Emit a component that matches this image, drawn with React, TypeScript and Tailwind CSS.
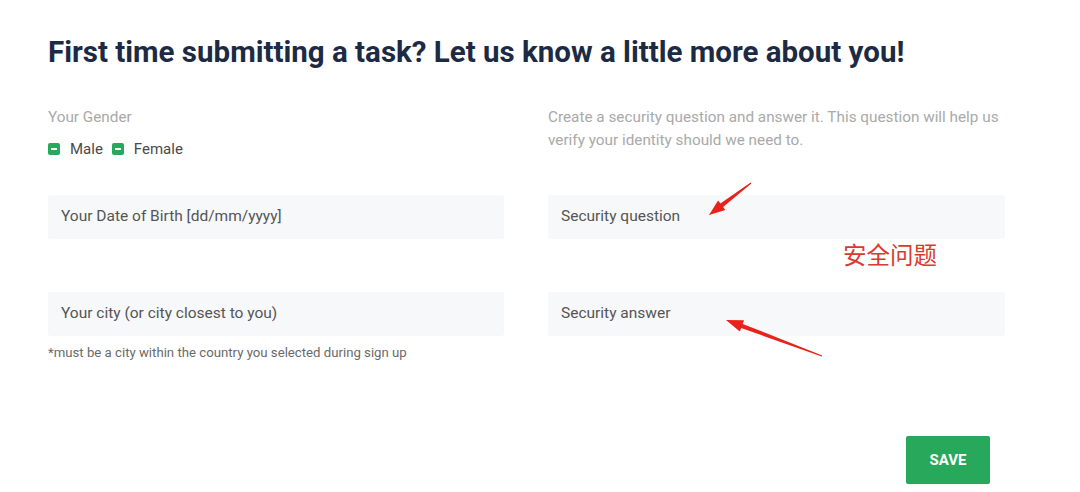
import React from "react";

type Pt = [number, number];

// tapered annotation arrow, tail -> tip
const arrowPoints = (tail: Pt, tip: Pt, headLen: number, headW: number) => {
  const dx = tip[0] - tail[0];
  const dy = tip[1] - tail[1];
  const len = Math.hypot(dx, dy);
  const ux = dx / len;
  const uy = dy / len;
  const nx = -uy;
  const ny = ux;
  const bx = tip[0] - ux * headLen;
  const by = tip[1] - uy * headLen;
  const pts: Pt[] = [
    [tail[0] + nx * 0.6, tail[1] + ny * 0.6],
    [bx + nx * 2.2, by + ny * 2.2],
    [bx + nx * headW, by + ny * headW],
    tip,
    [bx - nx * headW, by - ny * headW],
    [bx - nx * 2.2, by - ny * 2.2],
    [tail[0] - nx * 0.6, tail[1] - ny * 0.6],
  ];
  return pts.map((p) => p.join(",")).join(" ");
};

const Check = ({ label }: { label: string }) => (
  <label className="flex items-center gap-[10px]">
    <span className="flex h-[12px] w-[12px] items-center justify-center rounded-[2px] bg-[#27a85a]">
      <span className="h-[2px] w-[6px] bg-white" />
    </span>
    <span className="text-[15px] text-[#4a4a4a]">{label}</span>
  </label>
);

const Field = ({ placeholder }: { placeholder: string }) => (
  <div className="flex h-[44px] items-center rounded-[3px] bg-[#f7f8fa] px-[13px] text-[15.5px] text-[#555]">
    {placeholder}
  </div>
);

export default function App() {
  return (
    <div
      className="relative h-[492px] w-[1080px] overflow-hidden bg-white pl-[48px] pt-[32px]"
      style={{ fontFamily: "Roboto, 'Noto Sans CJK SC', sans-serif" }}
    >
      <h1 className="text-[29.5px] font-bold leading-[40px] text-[#1d2a44]">
        First time submitting a task? Let us know a little more about you!
      </h1>

      <div className="mt-[34px] grid grid-cols-[456px_457px] gap-x-[44px]">
        <div className="flex flex-col">
          <div className="text-[15.3px] leading-[23px] text-[#a9a9a9]">Your Gender</div>
          <div className="mt-[9px] flex items-center gap-[9px]">
            <Check label="Male" />
            <Check label="Female" />
          </div>
        </div>
        <div className="text-[15.3px] leading-[23px] text-[#a9a9a9]">
          Create a security question and answer it. This question will help us verify your
          identity should we need to.
        </div>

        <div className="mt-[34px]">
          <Field placeholder="Your Date of Birth [dd/mm/yyyy]" />
        </div>
        <div className="mt-[34px]">
          <Field placeholder="Security question" />
        </div>

        <div className="mt-[53px]">
          <Field placeholder="Your city (or city closest to you)" />
          <div className="mt-[7px] text-[13.2px] text-[#6a6a6a]">
            *must be a city within the country you selected during sign up
          </div>
        </div>
        <div className="mt-[53px]">
          <Field placeholder="Security answer" />
        </div>
      </div>

      <div className="mt-[74px] flex w-[942px] justify-end">
        <button className="h-[48px] w-[84px] rounded-[2px] bg-[#27a85a] text-[15px] font-bold text-white">
          SAVE
        </button>
      </div>

      {/* red annotation overlay */}
      <div className="absolute left-[843px] top-[241px] text-[23.5px] leading-[30px] text-[#d93a30]">
        安全问题
      </div>
      <svg className="pointer-events-none absolute left-0 top-0" width="1080" height="492">
        <polygon points={arrowPoints([751, 183], [709, 215], 16, 6)} fill="#e8221b" />
        <polygon points={arrowPoints([822, 356], [726, 320], 17, 6)} fill="#e8221b" />
      </svg>
    </div>
  );
}
